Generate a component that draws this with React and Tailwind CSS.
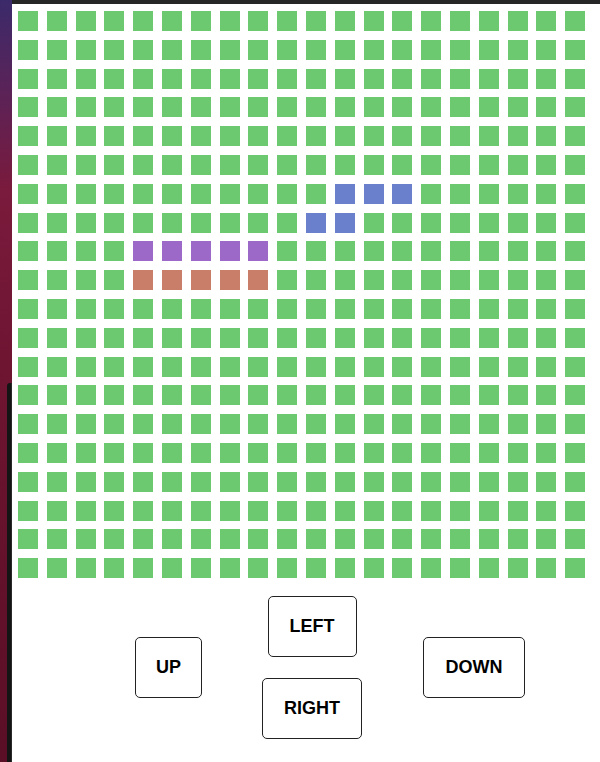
import React from "react";

const ROWS = 20;
const COLS = 20;

function cellColor(r, c) {
  if (r === 6 && c >= 11 && c <= 13) return "bg-[#6b80cc]";
  if (r === 7 && (c === 10 || c === 11)) return "bg-[#6b80cc]";
  if (r === 8 && c >= 4 && c <= 8) return "bg-[#9d69c8]";
  if (r === 9 && c >= 4 && c <= 8) return "bg-[#c97e6a]";
  return "bg-[#6cc970]";
}

function Btn({ children, className = "" }) {
  return (
    <button
      className={
        "h-[61px] px-[21px] border border-[#222] rounded-[5px] bg-white text-[18px] font-bold text-black flex items-center justify-center " +
        className
      }
      style={{ fontFamily: '"Liberation Sans", Arial, sans-serif' }}
    >
      {children}
    </button>
  );
}

export default function App() {
  const cells = [];
  for (let r = 0; r < ROWS; r++) {
    for (let c = 0; c < COLS; c++) {
      cells.push(<div key={r + "-" + c} className={"w-[20px] h-[20px] " + cellColor(r, c)} />);
    }
  }
  return (
    <div className="w-[600px] h-[762px] flex overflow-hidden bg-white">
      <div className="w-[12px] h-full flex flex-col bg-[linear-gradient(to_bottom,#3b2a6a_0px,#5a2358_90px,#7a1a3c_190px,#6c1430_400px,#5a0f26_762px)]">
        <div className="h-[383px]" />
        <div className="flex-1 flex justify-end">
          <div className="w-[5px] h-full bg-[#141414] rounded-tl-[3px] border-r border-[#2a2a2a]" />
        </div>
      </div>
      <div className="flex-1 h-full flex flex-col bg-white">
        <div className="h-[4px] bg-[#262626]" />
        <div className="pl-[6px] pt-[7px]">
          <div className="grid grid-cols-[repeat(20,20px)] gap-[8.8px]">{cells}</div>
        </div>
        <div className="mt-[18px] flex items-center pl-[123px]">
          <Btn className="w-[67px]">UP</Btn>
          <div className="ml-[60px] w-[100px] flex flex-col items-center gap-[21px]">
            <Btn className="w-[89px]">LEFT</Btn>
            <Btn className="w-[100px]">RIGHT</Btn>
          </div>
          <Btn className="ml-[61px] w-[102px]">DOWN</Btn>
        </div>
      </div>
    </div>
  );
}
